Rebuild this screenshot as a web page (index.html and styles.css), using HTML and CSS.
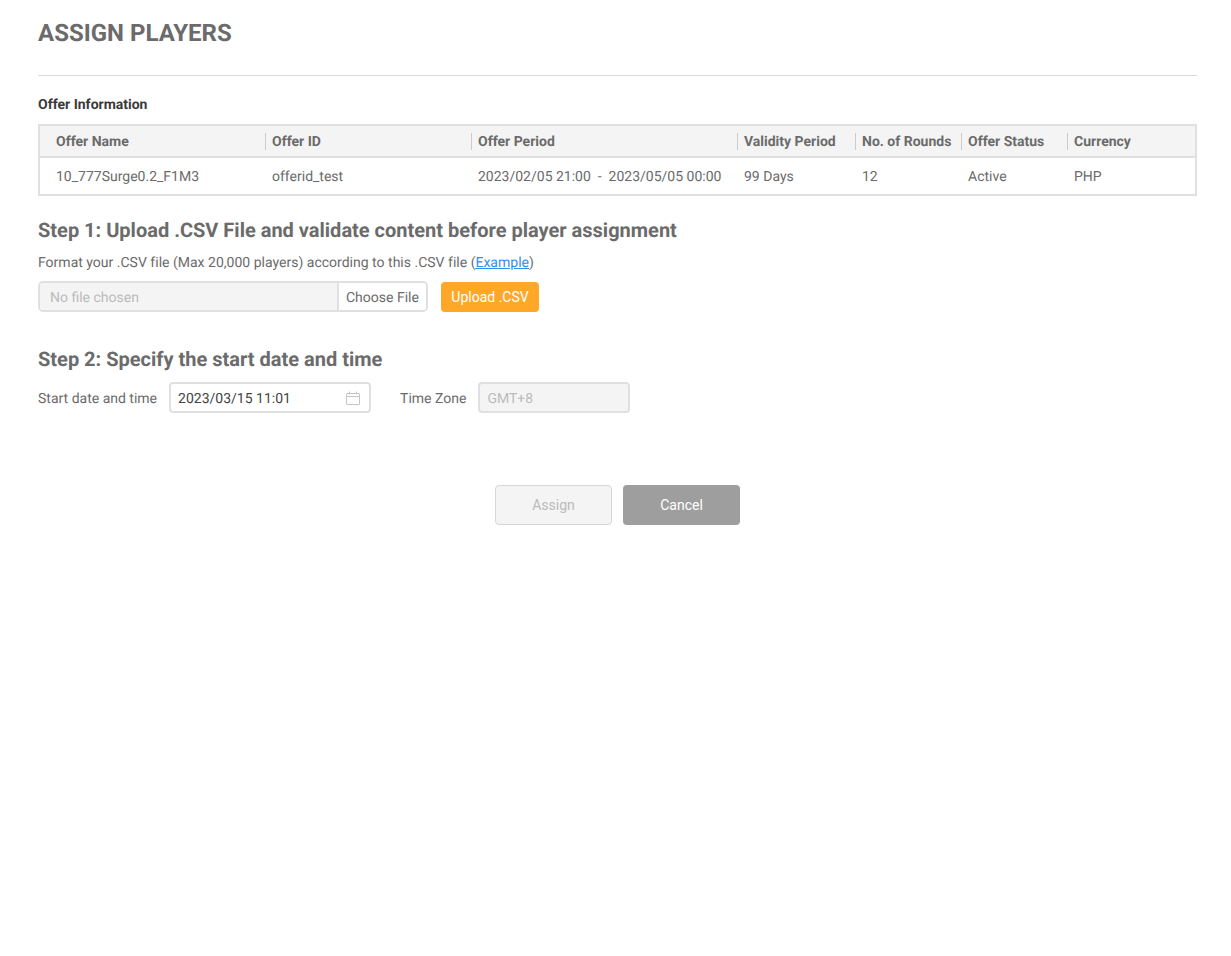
FILE: index.html
```html
<!DOCTYPE html>
<html lang="en">
<head>
<meta charset="utf-8">
<title>Assign Players</title>
<link rel="stylesheet" href="styles.css">
</head>
<body>
<main class="page">
  <h1 class="title">ASSIGN PLAYERS</h1>
  <h2 class="section-label">Offer Information</h2>
  <div class="table">
    <div class="row head">
      <div class="cell c1">Offer Name</div>
      <div class="cell c2 sep">Offer ID</div>
      <div class="cell c3 sep">Offer Period</div>
      <div class="cell c4 sep">Validity Period</div>
      <div class="cell c5 sep">No. of Rounds</div>
      <div class="cell c6 sep">Offer Status</div>
      <div class="cell c7 sep">Currency</div>
    </div>
    <div class="row body">
      <div class="cell c1">10_777Surge0.2_F1M3</div>
      <div class="cell c2">offerid_test</div>
      <div class="cell c3 pre">2023/02/05 21:00  -  2023/05/05 00:00</div>
      <div class="cell c4">99 Days</div>
      <div class="cell c5">12</div>
      <div class="cell c6">Active</div>
      <div class="cell c7">PHP</div>
    </div>
  </div>

  <h2 class="step step1">Step 1: Upload .CSV File and validate content before player assignment</h2>
  <p class="hint">Format your .CSV file (Max 20,000 players) according to this .CSV file (<a href="#" class="link">Example</a>)</p>
  <div class="upload">
    <div class="file">
      <span class="file-name">No file chosen</span>
      <span class="file-btn">Choose File</span>
    </div>
    <button class="btn-upload" type="button">Upload .CSV</button>
  </div>

  <h2 class="step step2">Step 2: Specify the start date and time</h2>
  <div class="when">
    <span class="label">Start date and time</span>
    <div class="date">
      <span class="date-text">2023/03/15 11:01</span>
      <svg class="cal" width="14" height="14" viewBox="0 0 14 14" fill="none" stroke="#c4c4c4" stroke-width="1">
        <rect x="0.5" y="2.5" width="13" height="11" rx="0.5"/>
        <path d="M0.5 5.5H13.5M3.5 0.5V3.5M10.5 0.5V3.5"/>
      </svg>
    </div>
    <span class="label tz-label">Time Zone</span>
    <div class="tz">GMT+8</div>
  </div>

  <div class="actions">
    <button class="btn btn-assign" type="button" disabled>Assign</button>
    <button class="btn btn-cancel" type="button">Cancel</button>
  </div>
</main>
</body>
</html>
```
FILE: styles.css
```css
* { box-sizing: border-box; }
html, body { margin: 0; padding: 0; background: #fff; }
body { font-family: Roboto, "Liberation Sans", sans-serif; font-size: 14px; color: #6b6b6b; text-rendering: geometricPrecision; }
.page { padding: 0 34px 0 38px; height: 956px; overflow: hidden; }
.title {
  margin: 0; height: 76px; padding-top: 17px;
  font-size: 24px; line-height: 32px; font-weight: 700; color: #6b6b6b;
  border-bottom: 1px solid #d9d9d9;
}
.section-label { margin: 20px 0 9px; font-size: 14px; line-height: 19px; font-weight: 700; color: #3a3a3a; }
.table { border: 2px solid #e0e0e0; }
.row { display: flex; }
.head { height: 32px; background: #f4f4f4; border-bottom: 2px solid #e0e0e0; align-items: center; font-weight: 700; }
.body { height: 36px; align-items: center; }
.cell { padding-left: 6px; padding-top: 2px; white-space: nowrap; line-height: 17px; }
.head .sep { position: relative; }
.head .sep::before { content: ""; position: absolute; left: -1px; top: 1px; height: 17px; border-left: 1px solid #ccc; }
.c1 { width: 226px; padding-left: 16px; }
.c2 { width: 206px; }
.c3 { width: 266px; }
.c4 { width: 118px; }
.c5 { width: 106px; }
.c6 { width: 106px; }
.c7 { flex: 1; }
.pre { white-space: pre; }
.step { margin: 0; font-size: 20px; line-height: 24px; font-weight: 700; color: #6b6b6b; }
.step1 { margin-top: 22px; }
.hint { margin: 12px 0 0; line-height: 19px; letter-spacing: 0.008px; }
.link { color: #2f8fee; }
.upload { display: flex; align-items: center; margin-top: 8px; }
.file {
  display: flex; width: 390px; height: 31px;
  border: 2px solid #e0e0e0; border-radius: 5px; overflow: hidden;
}
.file-name { width: 299px; background: #f4f4f4; color: #bbb; padding-left: 10px; line-height: 31px; border-right: 2px solid #e0e0e0; }
.file-btn { flex: 1; padding-left: 7px; line-height: 31px; background: #fff; }
.btn-upload {
  margin-left: 13px; width: 98px; height: 30px; border: 0; border-radius: 4px;
  background: #ffa726; color: #fff; font: inherit; padding: 0;
}
.step2 { margin-top: 35px; }
.when { display: flex; align-items: center; margin-top: 11px; }
.label { line-height: 17px; padding-top: 4px; }
.date {
  display: flex; align-items: center; justify-content: space-between;
  width: 202px; height: 31px; margin-left: 12px; padding: 0 9px 0 7px;
  border: 2px solid #e0e0e0; border-radius: 4px; color: #444;
}
.date-text { padding-top: 2px; }
.tz-label { margin-left: 29px; }
.tz {
  width: 152px; height: 31px; margin-left: 12px; padding-left: 7px;
  border: 2px solid #e0e0e0; border-radius: 4px; background: #f4f4f4; color: #bbb; line-height: 31px;
}
.actions { display: flex; justify-content: center; gap: 11px; margin-top: 72px; }
.btn { width: 117px; height: 40px; border-radius: 4px; font: inherit; padding: 0; }
.btn-assign { background: #f4f4f4; border: 1px solid #d6d6d6; color: #bbb; }
.btn-cancel { background: #9e9e9e; border: 0; color: #fff; }
```
